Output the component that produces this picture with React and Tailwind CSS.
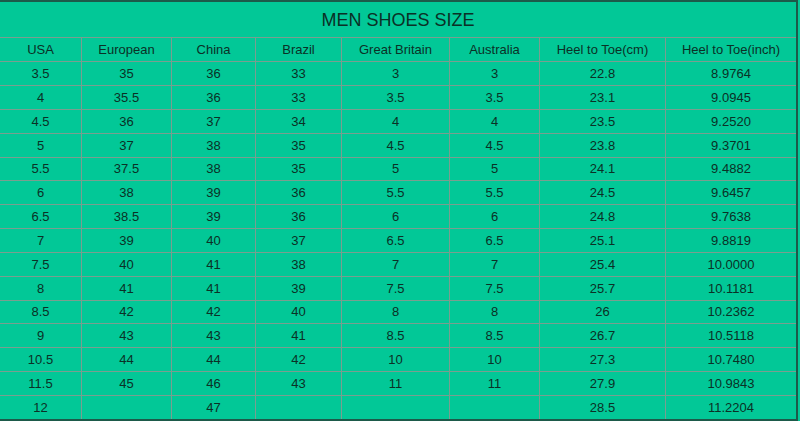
import React from "react";

const columns = [
  { label: "USA", w: "w-[81px]" },
  { label: "European", w: "w-[90px]" },
  { label: "China", w: "w-[84px]" },
  { label: "Brazil", w: "w-[86px]" },
  { label: "Great Britain", w: "w-[108px]" },
  { label: "Australia", w: "w-[90px]" },
  { label: "Heel to Toe(cm)", w: "w-[126px]" },
  { label: "Heel to Toe(inch)", w: "flex-1" },
];

const rows = [
  ["3.5", "35", "36", "33", "3", "3", "22.8", "8.9764"],
  ["4", "35.5", "36", "33", "3.5", "3.5", "23.1", "9.0945"],
  ["4.5", "36", "37", "34", "4", "4", "23.5", "9.2520"],
  ["5", "37", "38", "35", "4.5", "4.5", "23.8", "9.3701"],
  ["5.5", "37.5", "38", "35", "5", "5", "24.1", "9.4882"],
  ["6", "38", "39", "36", "5.5", "5.5", "24.5", "9.6457"],
  ["6.5", "38.5", "39", "36", "6", "6", "24.8", "9.7638"],
  ["7", "39", "40", "37", "6.5", "6.5", "25.1", "9.8819"],
  ["7.5", "40", "41", "38", "7", "7", "25.4", "10.0000"],
  ["8", "41", "41", "39", "7.5", "7.5", "25.7", "10.1181"],
  ["8.5", "42", "42", "40", "8", "8", "26", "10.2362"],
  ["9", "43", "43", "41", "8.5", "8.5", "26.7", "10.5118"],
  ["10.5", "44", "44", "42", "10", "10", "27.3", "10.7480"],
  ["11.5", "45", "46", "43", "11", "11", "27.9", "10.9843"],
  ["12", "", "47", "", "", "", "28.5", "11.2204"],
];

const Row = ({ cells, short }) => (
  <div className={`flex ${short ? "h-[23px]" : "h-[24px]"} border-t border-[#7a9e8f]`}>
    {cells.map((c, i) => (
      <div
        key={i}
        className={`${columns[i].w} flex items-center justify-center ${i > 0 ? "border-l border-[#7a9e8f]" : ""}`}
      >
        {c}
      </div>
    ))}
  </div>
);

export default function App() {
  return (
    <div className="w-[800px] h-[421px] bg-[#02c897] overflow-hidden">
      <div
        className="w-[798px] border-t-2 border-r-2 border-b-2 border-[#1d5a4a] text-[#0b3026] text-[13px]"
        style={{ fontFamily: '"Liberation Sans", Arial, sans-serif' }}
      >
        <div className="h-[35px] flex items-center justify-center text-[18px] pt-px">
          MEN SHOES SIZE
        </div>
        <div className="flex flex-col">
          <Row cells={columns.map((c) => c.label)} />
          {rows.map((r, i) => (
            <Row key={i} cells={r} short={i === 4 || i === 10} />
          ))}
        </div>
      </div>
    </div>
  );
}
